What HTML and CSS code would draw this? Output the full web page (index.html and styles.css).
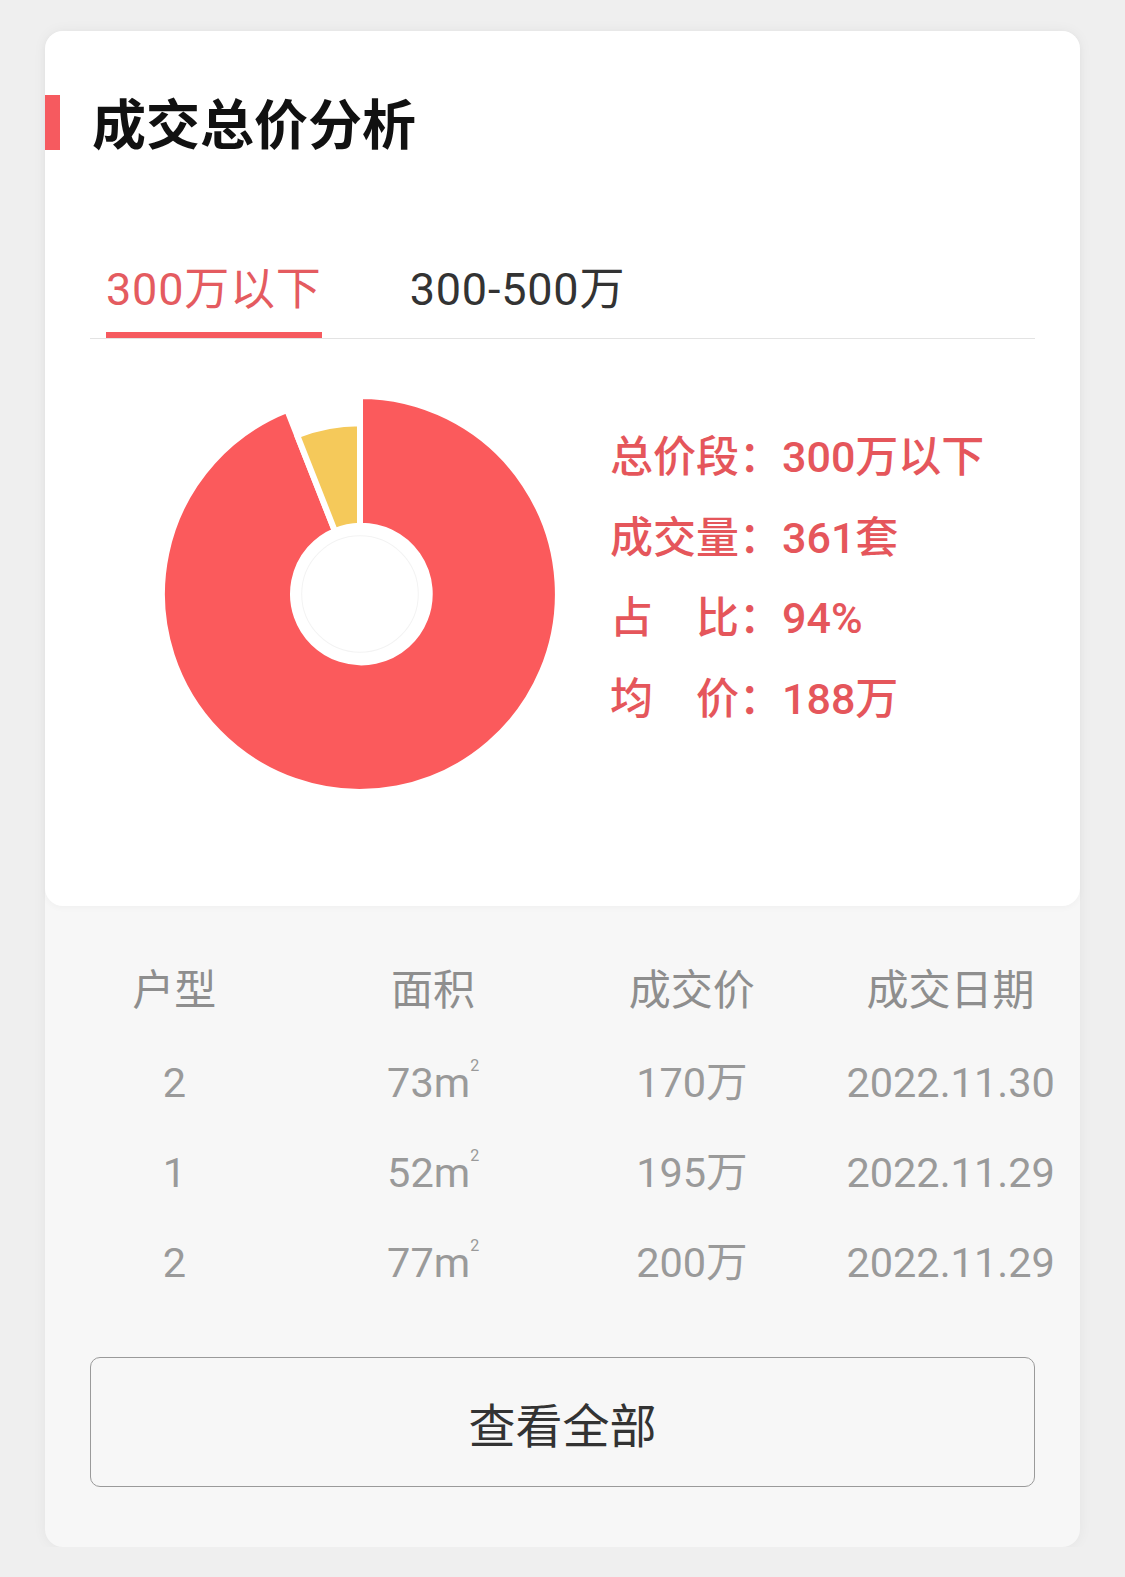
FILE: index.html
```html
<!DOCTYPE html>
<html lang="zh-CN">
<head>
    <meta charset="UTF-8">
    <meta name="viewport" content="width=device-width, initial-scale=1.0">
    <title>成交总价分析</title>
    <link rel="stylesheet" href="styles.css">
</head>
<body>
    <div class="card">
        <div class="card-top">
            <h1 class="title">成交总价分析</h1>

            <!-- Price range tabs -->
            <div class="tabs">
                <div class="tab active">300万以下</div>
                <div class="tab">300-500万</div>
            </div>

            <div class="chart">
                <svg class="pie" width="402" height="402" viewBox="0 0 400 400">
                    <path class="slice-red" d="M200 3 A197 197 0 1 1 127.5 16.8 L175 137.3 A68 68 0 1 0 200 132 Z"/>
                    <path class="slice-yellow" d="M200 30 A170 170 0 0 0 137.4 41.9 L175 137.3 A68 68 0 0 1 200 132 Z"/>
                    <circle class="pie-ring" cx="200" cy="200" r="58"/>
                </svg>
                <div class="legend">
                    <div>总价段：300万以下</div>
                    <div>成交量：361套</div>
                    <div>占&#12288;比：94%</div>
                    <div>均&#12288;价：188万</div>
                </div>
            </div>
        </div>

        <!-- Recent deals -->
        <div class="deals">
            <div class="row head">
                <div>户型</div>
                <div>面积</div>
                <div>成交价</div>
                <div>成交日期</div>
            </div>
            <div class="row">
                <div>2</div>
                <div>73m<sup>2</sup></div>
                <div>170万</div>
                <div>2022.11.30</div>
            </div>
            <div class="row">
                <div>1</div>
                <div>52m<sup>2</sup></div>
                <div>195万</div>
                <div>2022.11.29</div>
            </div>
            <div class="row">
                <div>2</div>
                <div>77m<sup>2</sup></div>
                <div>200万</div>
                <div>2022.11.29</div>
            </div>
            <button class="more">查看全部</button>
        </div>
    </div>
</body>
</html>
```

FILE: styles.css
```css
body {
    margin: 0;
    padding: 31px 0 0;
    background-color: #efefef;
    font-family: Roboto, "Noto Sans CJK SC", sans-serif;
    color: #333;
}
.card {
    width: 1035px;
    margin-left: 45px;
    background: #f7f7f7;
    border-radius: 18px;
    box-shadow: 0 0 14px rgba(0, 0, 0, 0.05);
}
.card-top {
    background: #fff;
    border-radius: 18px;
    box-shadow: 0 2px 6px rgba(0, 0, 0, 0.03);
    overflow: hidden;
}
.title {
    display: flex;
    align-items: center;
    margin: 64px 0 0;
    height: 54px;
    font-family: "Noto Sans CJK SC", sans-serif;
    font-size: 54px;
    line-height: 54px;
    font-weight: bold;
    color: #111;
}
.title::before {
    content: "";
    width: 15px;
    height: 55px;
    margin-right: 32px;
    background: #f65a5f;
}
.tabs {
    display: flex;
    margin: 116px 45px 0;
    border-bottom: 1px solid #e3e3e3;
}
.tab {
    font-size: 45px;
    line-height: 50px;
    letter-spacing: 0.8px;
    padding-bottom: 17px;
    border-bottom: 6px solid transparent;
    color: #333;
    margin-left: 88px;
}
.tab:first-child {
    margin-left: 16px;
}
.tab.active {
    color: #e45b60;
    border-bottom-color: #f65a5f;
}
.chart {
    display: flex;
    margin: 0 45px;
    padding-bottom: 111px;
}
.pie {
    margin: 54px 0 0 69px;
    flex-shrink: 0;
}
.slice-red {
    fill: #fb5a5c;
    stroke: #fff;
    stroke-width: 6;
    stroke-linejoin: round;
}
.slice-yellow {
    fill: #f5c95a;
    stroke: #fff;
    stroke-width: 6;
    stroke-linejoin: round;
}
.pie-ring {
    fill: none;
    stroke: #f3f3f3;
    stroke-width: 1;
}
.legend {
    margin: 78px 0 0 49px;
    font-size: 43px;
    line-height: 80.5px;
    font-weight: 500;
    color: #e5565b;
    white-space: nowrap;
}
.deals {
    padding: 40px 0 60px;
}
.row {
    display: grid;
    grid-template-columns: repeat(4, 1fr);
    height: 90px;
    line-height: 90px;
    font-size: 41.5px;
    color: #9a9a9a;
    text-align: center;
}
.row.head {
    color: #8e8e8e;
    font-size: 42px;
    margin-bottom: 2px;
}
.row sup {
    font-size: 16px;
    vertical-align: 26px;
    line-height: 0;
}
.more {
    display: flex;
    align-items: center;
    justify-content: center;
    width: 945px;
    height: 130px;
    margin: 49px 45px 0;
    box-sizing: border-box;
    border: 1.5px solid #9a9a9a;
    border-radius: 10px;
    background: transparent;
    font-family: "Noto Sans CJK SC", sans-serif;
    font-size: 47px;
    color: #333;
}
```
